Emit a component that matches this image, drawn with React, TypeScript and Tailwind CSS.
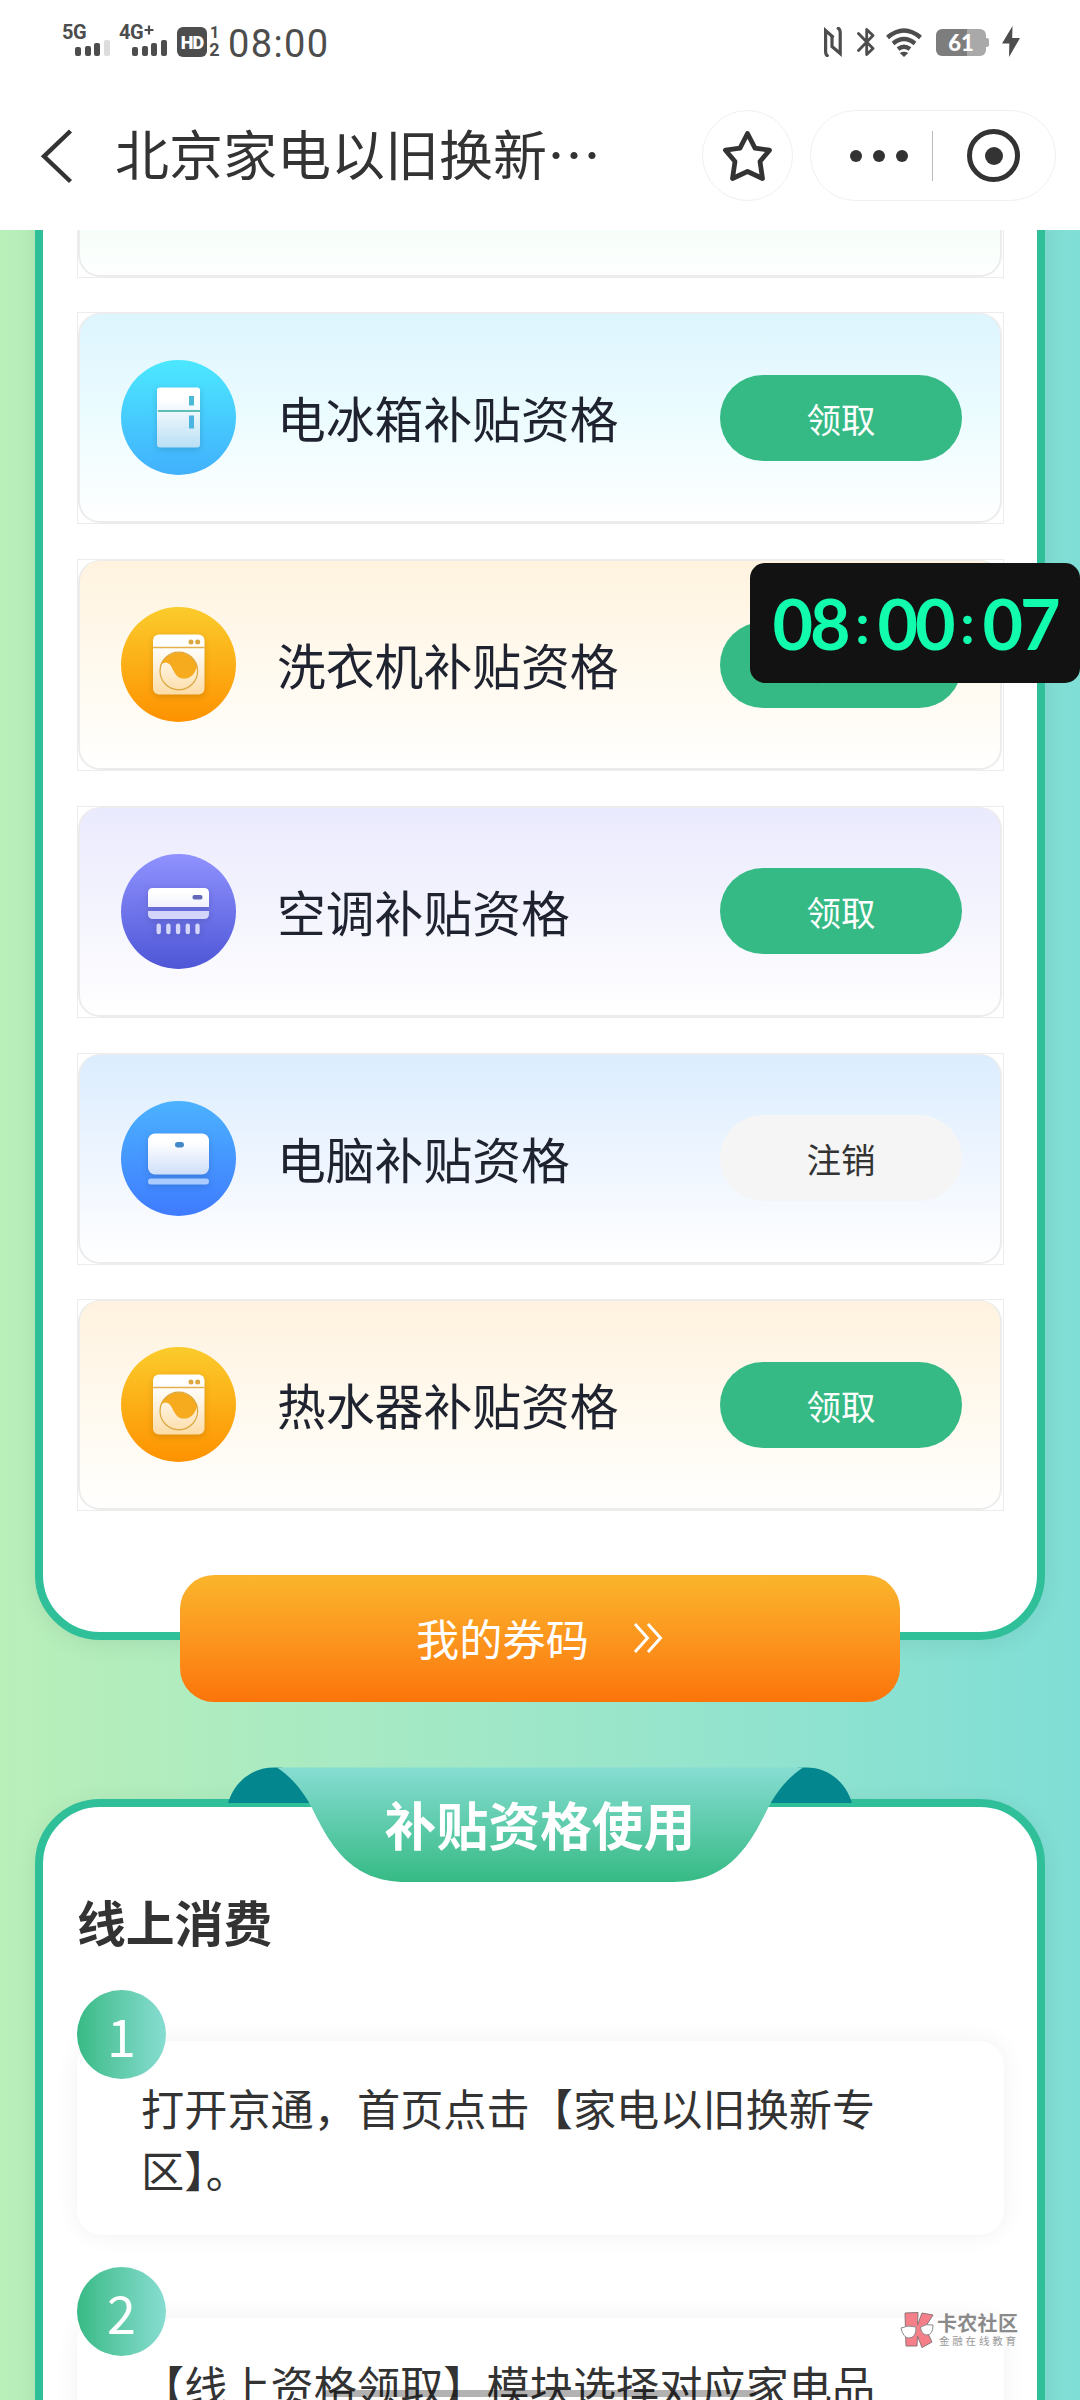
import { useState, type ReactNode } from "react";
import clsx from "clsx";

// #################################
// ### Data
// #################################

type Kind = "fridge" | "washer" | "aircon" | "computer";

type Subsidy = {
  name: string;
  kind: Kind;
  background: string;
  claimed: boolean;
};

const SUBSIDIES: Subsidy[] = [
  {
    name: "电视机补贴资格",
    kind: "computer",
    background: "from-[#ddfbe9] to-[#fdfffe]",
    claimed: false,
  },
  {
    name: "电冰箱补贴资格",
    kind: "fridge",
    background: "from-[#ddf5fe] via-[#ecfcff] to-white",
    claimed: false,
  },
  {
    name: "洗衣机补贴资格",
    kind: "washer",
    background: "from-[#fff3df] via-[#fff9ee] to-[#fffffe]",
    claimed: false,
  },
  {
    name: "空调补贴资格",
    kind: "aircon",
    background: "from-[#eaeafe] via-[#f4f4fe] to-white",
    claimed: false,
  },
  {
    name: "电脑补贴资格",
    kind: "computer",
    background: "from-[#dbedfe] via-[#eef5ff] to-white",
    claimed: true,
  },
  {
    name: "热水器补贴资格",
    kind: "washer",
    background: "from-[#fff2df] via-[#fff9ee] to-[#fffffe]",
    claimed: false,
  },
];

const STEPS = [
  "打开京通，首页点击【家电以旧换新专区】。",
  "【线上资格领取】模块选择对应家电品类领取资格。",
];

const ICON_COLORS: Record<Kind, [string, string]> = {
  fridge: ["#4ce8ff", "#41b0fd"],
  washer: ["#fbcb2c", "#fe9200"],
  aircon: ["#8f92fe", "#4e56d6"],
  computer: ["#4bb2ff", "#3f7bff"],
};

// #################################
// ### Status bar
// #################################

function Signal({ label, plus, weak }: { label: string; plus?: boolean; weak?: boolean }) {
  return (
    <div className="flex w-[48px] flex-col">
      <div className="flex h-[15px] font-['Roboto'] text-[20px] font-bold leading-[15px] tracking-[-0.5px] whitespace-nowrap">
        {label}
        {plus && (
          <svg className="ml-[1px]" width="10" height="10" viewBox="0 0 10 10">
            <path d="M5 0.500V9.500M0.500 5H9.500" stroke="#4d4d4d" strokeWidth="2.200" />
          </svg>
        )}
      </div>
      <div className="ml-[13px] flex h-[16px] items-end gap-[3.5px]">
        <span className="h-[9px] w-[6px] rounded-[2px] bg-[#4d4d4d]" />
        <span className="h-[10px] w-[6px] rounded-[2px] bg-[#4d4d4d]" />
        <span className="h-[13px] w-[6px] rounded-[2px] bg-[#4d4d4d]" />
        <span
          className={clsx(
            "h-[16px] w-[6px] rounded-[2px]",
            weak ? "bg-[#dcdcdc]" : "bg-[#4d4d4d]",
          )}
        />
      </div>
    </div>
  );
}

function StatusBar() {
  return (
    <div className="flex h-[84px] items-start pl-[62px] text-[#4d4d4d]">
      <div className="flex pt-[25px]">
        <Signal label="5G" weak />
        <div className="ml-[9px]">
          <Signal label="4G" plus />
        </div>
      </div>
      <div className="mt-[27px] ml-[10px] flex h-[30px] w-[30px] items-center justify-center rounded-[6px] bg-[#4d4d4d] font-['Roboto'] text-[18px] font-black tracking-[-1px] text-white">
        HD
      </div>
      <div className="mt-[26px] ml-[1px] flex w-[13px] flex-col items-center font-['Roboto'] text-[16px] font-bold leading-[14px]">
        <span>1</span>
        <span className="mt-[3px] text-[18px]">2</span>
      </div>
      <span className="mt-[22px] ml-[7px] font-['Roboto'] text-[38px] leading-[44px] tracking-[1.4px]">
        08:00
      </span>

      <svg className="mt-[27px] ml-auto" width="18" height="30" viewBox="0 0 18 30">
        <path
          d="M4.5 29.5C2 28.5 1.6 27 1.6 25V3.5L9.5 10.5"
          fill="none"
          stroke="#4d4d4d"
          strokeWidth="3.2"
        />
        <path
          d="M13 .5C15.6 1.5 16.2 3 16.2 5V26.5L8 19.5V9"
          fill="none"
          stroke="#4d4d4d"
          strokeWidth="3.2"
        />
      </svg>
      <svg className="mt-[27px] ml-[15px]" width="18" height="30" viewBox="0 0 18 30">
        <path
          d="M1.5 6.5L16 21.5L9.7 27.5V2.5L16 8.5L1.5 23.5"
          fill="none"
          stroke="#4d4d4d"
          strokeWidth="2.8"
          strokeLinejoin="round"
          strokeLinecap="round"
        />
      </svg>
      <svg className="mt-[28px] ml-[11px]" width="36" height="29" viewBox="0 0 36 29">
        <g fill="none" stroke="#4d4d4d" strokeWidth="4.4">
          <path d="M1.5 9.5Q18 -4.5 34.5 9.5" />
          <path d="M7 15.5Q18 6.5 29 15.5" />
          <path d="M12 21Q18 16.5 24 21" />
        </g>
        <path d="M13.8 25Q18 22.500 22.2 25L18 29Z" fill="#4d4d4d" />
      </svg>
      <div className="mt-[29px] ml-[14px] flex items-center">
        <div className="flex h-[27px] w-[50px] items-center justify-center rounded-[6px] bg-linear-to-r from-[#7d7d7d] from-61% to-[#a9a9a9] to-61% font-['Lato'] text-[22px] font-black text-white">
          61
        </div>
        <span className="h-[9px] w-[3px] rounded-r-[2px] bg-[#a9a9a9]" />
      </div>
      <svg className="mt-[26px] mr-[60px] ml-[13px]" width="18" height="31" viewBox="0 0 18 31">
        <path d="M10.5 0L0 17.5H7.3L7 31L18 12H10.2Z" fill="#4d4d4d" />
      </svg>
    </div>
  );
}

// #################################
// ### Navigation bar
// #################################

function NavBar() {
  const [starred, setStarred] = useState(false);

  return (
    <header className="flex h-[143px] items-center pl-[40px] text-[#333]">
      <svg width="34" height="56" viewBox="0 0 34 56" fill="none">
        <path d="M30.5 3L4 28.3L30.5 53.5" stroke="#333" strokeWidth="4.400" />
      </svg>
      <h1 className="ml-[41px] w-[587px] pb-[5px] text-[54px] leading-[80px] whitespace-nowrap">
        北京家电以旧换新…
      </h1>
      <button
        onClick={() => setStarred(!starred)}
        className="flex h-[91px] w-[91px] items-center justify-center rounded-full border-[1.5px] border-[#f0f0f0]"
      >
        <svg width="54" height="54" viewBox="0 0 54 54">
          <path
            d="M26.500 4.500L34 19.200L48.500 21.200L39 32.500L41.500 49.500L26.500 42.500L11.500 49.500L14 32.500L4.500 21.200L19 19.200Z"
            fill={starred ? "#333" : "none"}
            stroke="#333"
            strokeWidth="4.8"
            strokeLinejoin="round"
          />
        </svg>
      </button>
      <div className="ml-[17px] flex h-[91px] w-[246px] items-center rounded-full border-[1.5px] border-[#f0f0f0]">
        <div className="ml-[39px] flex gap-[11px]">
          <span className="h-[12px] w-[12px] rounded-full bg-[#333]" />
          <span className="h-[12px] w-[12px] rounded-full bg-[#333]" />
          <span className="h-[12px] w-[12px] rounded-full bg-[#333]" />
        </div>
        <span className="ml-[24px] h-[50px] w-px bg-[#bbb]" />
        <span className="ml-[34px] flex h-[53px] w-[53px] items-center justify-center rounded-full border-[5.5px] border-[#333]">
          <span className="h-[18px] w-[18px] rounded-full bg-[#333]" />
        </span>
      </div>
    </header>
  );
}

// #################################
// ### Appliance icons
// #################################

function Glyph({ kind, fill }: { kind: Kind; fill: string }) {
  switch (kind) {
    case "fridge":
      return (
        <>
          <rect x="36" y="27.5" width="43" height="60" rx="3" fill={fill} />
          <path d="M37 51H79" stroke="#5bbfb8" strokeWidth="2" />
          <rect x="68" y="36" width="5" height="9.5" fill="#4cb9d8" />
          <rect x="68" y="55.5" width="5" height="13" fill="#4cb4e0" />
        </>
      );
    case "washer":
      return (
        <>
          <rect x="32" y="27.5" width="51.5" height="60" rx="6" fill={fill} />
          <path d="M32 40.5H83.5" stroke="#e3b04a" strokeWidth="1.4" />
          <circle cx="70" cy="35" r="2.5" fill="#dba63d" />
          <circle cx="76.7" cy="35" r="2.5" fill="#dba63d" />
          <path
            d="M39.800 58A19 19 0 0 1 76 59.500C73.500 69 68 72 61.500 71.500C51.500 70.500 52.500 55.500 44.500 55.500Q41.500 55.500 39.800 58Z"
            fill="#f6aa1d"
          />
          <circle cx="57.8" cy="64" r="18.8" fill="none" stroke="#dba63d" strokeWidth="1.2" />
        </>
      );
    case "aircon":
      return (
        <>
          <path d="M27 53V39Q27 34 32 34H83Q88 34 88 39V53Z" fill={fill} />
          <path d="M27 57H88V60Q88 65 83 65H32Q27 65 27 60Z" fill="#d3d6fa" />
          <rect x="71.5" y="41" width="10" height="4.4" rx="2" fill="#6368b8" />
          <path
            d="M37.7 71.7V78M47.4 71.7V78M57.1 71.7V78M66.8 71.7V78M76.5 71.7V78"
            stroke="#d3d6fa"
            strokeWidth="4.4"
            strokeLinecap="round"
          />
        </>
      );
    case "computer":
      return (
        <>
          <rect x="27" y="32.5" width="61" height="41" rx="7" fill={fill} />
          <rect x="54" y="41" width="9" height="5.5" rx="2.7" fill="#4488c8" />
          <rect x="27" y="77.5" width="61" height="6" rx="3" fill="#a9cbff" />
        </>
      );
  }
}

const GLYPH_END: Record<Kind, string> = {
  fridge: "#b9dff4",
  washer: "#fcdca6",
  aircon: "#f0f0fe",
  computer: "#cfdff9",
};

function ApplianceIcon({ kind, id }: { kind: Kind; id: string }) {
  const [top, bottom] = ICON_COLORS[kind];
  return (
    <svg width="115" height="115" viewBox="0 0 115 115" className="shrink-0">
      <defs>
        <linearGradient id={`${id}-disc`} x1="0" y1="0" x2="0" y2="1">
          <stop offset="0" stopColor={top} />
          <stop offset="1" stopColor={bottom} />
        </linearGradient>
        <linearGradient id={`${id}-body`} x1="0" y1="0" x2="0" y2="1">
          <stop offset="0.2" stopColor="#ffffff" />
          <stop offset="1" stopColor={GLYPH_END[kind]} />
        </linearGradient>
      </defs>
      <circle cx="57.5" cy="57.5" r="57.5" fill={`url(#${id}-disc)`} />
      <g className="drop-shadow-[0_2px_3px_rgba(0,0,0,0.14)]">
        <Glyph kind={kind} fill={`url(#${id}-body)`} />
      </g>
    </svg>
  );
}

// #################################
// ### Subsidy list
// #################################

function SubsidyCard({ item, id }: { item: Subsidy; id: string }) {
  return (
    <div className="h-[212px] shrink-0 border border-[#ececec] pr-px">
      <div
        className={clsx(
          "flex h-full items-center rounded-[22px] border-2 border-t-[1px] border-[#ececec] bg-linear-to-b bg-origin-border pr-[38px] pl-[41px]",
          item.background,
        )}
      >
        <ApplianceIcon kind={item.kind} id={id} />
        <span className="ml-[41px] flex-1 pb-px text-[48.8px] leading-[70px] whitespace-nowrap text-[#1f2330]">
          {item.name}
        </span>
        <button
          className={clsx(
            "h-[86px] w-[242px] rounded-full text-[34.5px] leading-[50px]",
            item.claimed ? "bg-[#f5f5f5] text-[#333]" : "bg-[#36ba85] text-white",
          )}
        >
          {item.claimed ? "注销" : "领取"}
        </button>
      </div>
    </div>
  );
}

function Panel({ className, children }: { className?: string; children: ReactNode }) {
  return (
    <section
      className={clsx(
        "mx-[35px] rounded-[65px] border-8 border-[#2fc09a] bg-white pr-[33px] pl-[34px] shadow-[0_4px_24px_rgba(0,0,0,0.07)]",
        className,
      )}
    >
      {children}
    </section>
  );
}

// #################################
// ### Usage section
// #################################

function Ribbon({ title }: { title: string }) {
  return (
    <div className="absolute top-[-40px] left-[185px] h-[116px] w-[624px]">
      <svg className="absolute inset-0" width="624" height="116" viewBox="0 0 624 116">
        <defs>
          <linearGradient id="ribbon" x1="0" y1="0" x2="0" y2="1">
            <stop offset="0" stopColor="#86ddd2" />
            <stop offset="1" stopColor="#36ba85" />
          </linearGradient>
        </defs>
        <path d="M0 36C7 14 24 0.5 46 0.5H54L90 36Z" fill="#04868e" />
        <path d="M624 36C617 14 600 0.5 578 0.5H570L534 36Z" fill="#04868e" />
        <path
          d="M49 0.5H575C558 12 548 26 540 41C522 78 501 115 446 115H178C123 115 102 78 84 41C76 26 66 12 49 0.5Z"
          fill="url(#ribbon)"
        />
      </svg>
      <h2 className="relative pt-[19px] text-center text-[51.8px] leading-[76px] font-bold text-white">
        {title}
      </h2>
    </div>
  );
}

function Step({ index, text }: { index: number; text: string }) {
  return (
    <div>
      <div className="relative z-10 mb-[-38px] flex h-[89px] w-[89px] items-center justify-center rounded-full bg-linear-to-r from-[#36ba85] to-[#86ddd2] text-[52px] text-white">
        {index}
      </div>
      <p className="h-[194px] rounded-[25px] bg-white pt-[35px] pr-[120px] pl-[64px] text-[43.2px] leading-[62px] text-[#333] shadow-[0_0_24px_rgba(0,0,0,0.06)]">
        {text}
      </p>
    </div>
  );
}

// #################################
// ### Overlays
// #################################

function FloatingClock() {
  return (
    <div className="absolute top-[563px] right-0 flex h-[120px] w-[330px] items-center justify-center rounded-[15px] bg-[#121212] font-['Lato'] text-[70px] leading-[80px] font-bold text-[#12fcae]">
      <span className="w-[77px] text-center tracking-[-3px]">08</span>
      <span className="w-[28px] text-center text-[56px]">:</span>
      <span className="w-[77px] text-center tracking-[-3px]">00</span>
      <span className="w-[28px] text-center text-[56px]">:</span>
      <span className="w-[77px] text-center tracking-[-3px]">07</span>
    </div>
  );
}

function CommunityBadge() {
  return (
    <div className="absolute top-[2311px] left-[899px] flex">
      <svg width="36" height="38" viewBox="0 0 36 38">
        <path
          d="M6 2L19 1.5L18.5 14L23 2L34 4L26 16.5L33 31L23 36.5L18.5 25L18 35H7Z"
          fill="#f57f88"
          stroke="#8c7478"
          strokeWidth="1"
        />
        <g fill="#fff" stroke="#8a8a8a" strokeWidth="1">
          <path d="M2 17Q9 13.5 17 16Q17.5 27 9.5 27Q4 26.5 2 17Z" />
          <path d="M21.5 16Q27 12.5 34 14Q34 24 27.5 24Q22 23 21.5 16Z" />
        </g>
      </svg>
      <div className="ml-[2px] flex flex-col whitespace-nowrap">
        <span className="mt-[1px] text-[20px] leading-[22px] font-bold tracking-[0.3px] text-[#8a8a8a]">
          卡农社区
        </span>
        <span className="ml-[2px] text-[10.5px] leading-[14px] tracking-[2.8px] text-[#999]">
          金融在线教育
        </span>
      </div>
    </div>
  );
}

// #################################
// ### Page
// #################################

export default function App() {
  return (
    <div className="relative h-[2400px] w-[1080px] overflow-hidden bg-white font-['Noto_Sans_CJK_SC',sans-serif]">
      <div className="h-[230px]">
        <StatusBar />
        <NavBar />
      </div>

      <main className="h-[2170px] overflow-hidden bg-linear-to-r from-[#b9efb9] to-[#7fded6]">
        <Panel className="mt-[-200px] flex h-[1610px] flex-col gap-[34.8px] pt-[27.5px]">
          {SUBSIDIES.map((item, i) => (
            <SubsidyCard key={item.name} item={item} id={`subsidy-${i}`} />
          ))}
        </Panel>

        <button className="relative mx-auto mt-[-65px] flex h-[127px] w-[720px] items-center justify-center gap-[43px] rounded-[34px] bg-linear-to-b from-[#fab52c] to-[#fb740a] pb-[2px] text-[43.2px] text-white">
          我的券码
          <svg width="32" height="32" viewBox="0 0 32 32" fill="none">
            <path
              d="M3 2L15.5 16L3 30M16 2L28.5 16L16 30"
              stroke="white"
              strokeWidth="3"
            />
          </svg>
        </button>

        <Panel className="relative mt-[97px] h-[900px] pt-[84px]">
          <Ribbon title="补贴资格使用" />
          <h3 className="text-[48.8px] leading-[60px] font-bold text-[#333]">线上消费</h3>
          <div className="mt-[39px] flex flex-col gap-[32px]">
            {STEPS.map((text, i) => (
              <Step key={text} index={i + 1} text={text} />
            ))}
          </div>
        </Panel>
      </main>

      <FloatingClock />
      <CommunityBadge />
      <div className="absolute bottom-[3px] left-[324px] h-[7px] w-[432px] rounded-full bg-black/30" />
    </div>
  );
}
